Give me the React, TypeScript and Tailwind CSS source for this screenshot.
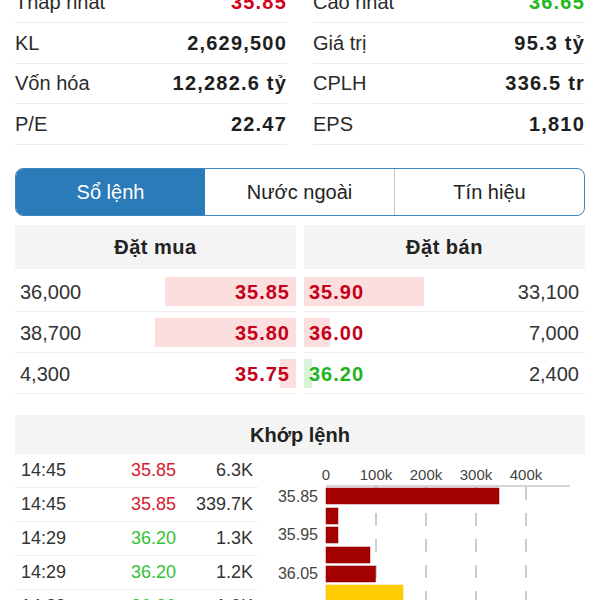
import React from 'react';

type Stat = { label: string; value: string; color?: string };

const leftStats: Stat[] = [
    { label: 'Thấp nhất', value: '35.85', color: 'text-[#d0021b]' },
    { label: 'KL', value: '2,629,500' },
    { label: 'Vốn hóa', value: '12,282.6 tỷ' },
    { label: 'P/E', value: '22.47' },
];

const rightStats: Stat[] = [
    { label: 'Cao nhất', value: '36.65', color: 'text-[#1fb81f]' },
    { label: 'Giá trị', value: '95.3 tỷ' },
    { label: 'CPLH', value: '336.5 tr' },
    { label: 'EPS', value: '1,810' },
];

const bids = [
    { vol: '36,000', price: '35.85', bar: 131, up: false },
    { vol: '38,700', price: '35.80', bar: 141, up: false },
    { vol: '4,300', price: '35.75', bar: 16, up: false },
];

const asks = [
    { vol: '33,100', price: '35.90', bar: 120, up: false },
    { vol: '7,000', price: '36.00', bar: 26, up: false },
    { vol: '2,400', price: '36.20', bar: 8, up: true },
];

const trades = [
    { time: '14:45', price: '35.85', vol: '6.3K', up: false },
    { time: '14:45', price: '35.85', vol: '339.7K', up: false },
    { time: '14:29', price: '36.20', vol: '1.3K', up: true },
    { time: '14:29', price: '36.20', vol: '1.2K', up: true },
    { time: '14:29', price: '36.20', vol: '1.0K', up: true },
];

// khoi luong theo muc gia (nghin)
const volBars = [
    { y: 34, k: 346, color: '#a30000' },
    { y: 54, k: 24, color: '#a30000' },
    { y: 73, k: 24, color: '#a30000' },
    { y: 93, k: 88, color: '#a30000' },
    { y: 112, k: 99, color: '#a30000' },
    { y: 131, k: 154, color: '#ffcc00' },
];

const StatColumn: React.FC<{ items: Stat[] }> = ({ items }) => (
    <div>
        {items.map((s) => (
            <div key={s.label} className="h-[40.5px] border-b border-[#ececec] flex items-center justify-between">
                <span className="text-[20px] text-[#2a2a2a]">{s.label}</span>
                <span className={`text-[20px] font-bold tracking-[1.2px] ${s.color ?? 'text-[#1e1e1e]'}`}>{s.value}</span>
            </div>
        ))}
    </div>
);

const VolumeChart: React.FC = () => (
    <svg width={327} height={146} className="block">
        {[0, 100, 200, 300, 400].map((k) => (
            <text key={k} x={68 + k * 0.5} y={26} fontSize={15} fill="#444" textAnchor="middle">
                {k === 0 ? '0' : `${k}k`}
            </text>
        ))}
        {[100, 200, 300, 400].map((k) => (
            <line key={k} x1={68 + k * 0.5} x2={68 + k * 0.5} y1={33} y2={146} stroke="#bdbdbd" strokeWidth={1.5} strokeDasharray="13 13" />
        ))}
        <line x1={68} x2={312} y1={32} y2={32} stroke="#aaa" strokeWidth={1} />
        {volBars.map((b) => (
            <rect key={b.y} x={68} y={b.y} width={b.k * 0.5} height={16} fill={b.color} stroke={b.color === '#ffcc00' ? '#f2c200' : '#8a0000'} strokeWidth={0.5} />
        ))}
        <text x={60} y={47.5} fontSize={16} fill="#444" textAnchor="end">35.85</text>
        <text x={60} y={85.5} fontSize={16} fill="#444" textAnchor="end">35.95</text>
        <text x={60} y={124.5} fontSize={16} fill="#444" textAnchor="end">36.05</text>
    </svg>
);

const App: React.FC = () => {
    return (
        <div className="w-[600px] h-[600px] overflow-hidden bg-white font-['Liberation_Sans',Arial,sans-serif] text-[#222]">
            <div className="px-[15px]">
                <div className="-mt-[17.5px] grid grid-cols-2 gap-x-[26px]">
                    <StatColumn items={leftStats} />
                    <StatColumn items={rightStats} />
                </div>

                <div className="mt-[23.5px] h-[48px] rounded-[8px] border-[1.5px] border-[#3d86c0] flex overflow-hidden">
                    <div className="flex-1 bg-[#2b7bb9] text-white text-[20px] flex items-center justify-center">Sổ lệnh</div>
                    <div className="flex-1 text-[20px] text-[#222] flex items-center justify-center">Nước ngoài</div>
                    <div className="flex-1 text-[20px] text-[#222] border-l border-[#c8c8c8] flex items-center justify-center">Tín hiệu</div>
                </div>

                <div className="mt-[9px] grid grid-cols-2 gap-x-[8px]">
                    <div>
                        <div className="h-[44px] bg-[#f4f4f4] flex items-center justify-center text-[20px] font-bold tracking-[0.5px]">Đặt mua</div>
                        {bids.map((r, i) => (
                            <div key={r.price} className={`relative h-[41px] border-b border-[#eeeeee] flex items-center justify-between pl-[5px] pr-[6px] ${i === 0 ? 'mt-[2px]' : ''}`}>
                                <div className="absolute right-0 top-[6px] bottom-[5px] bg-[#fddede]" style={{ width: r.bar }} />
                                <span className="relative pt-[2px] text-[20px] text-[#333]">{r.vol}</span>
                                <span className={`relative pt-[2px] text-[20px] font-bold tracking-[1px] ${r.up ? 'text-[#1fb31f]' : 'text-[#c4001a]'}`}>{r.price}</span>
                            </div>
                        ))}
                    </div>
                    <div>
                        <div className="h-[44px] bg-[#f4f4f4] flex items-center justify-center text-[20px] font-bold tracking-[0.5px]">Đặt bán</div>
                        {asks.map((r, i) => (
                            <div key={r.price} className={`relative h-[41px] border-b border-[#eeeeee] flex items-center justify-between pl-[5px] pr-[6px] ${i === 0 ? 'mt-[2px]' : ''}`}>
                                <div className={`absolute left-0 top-[6px] bottom-[5px] ${r.up ? 'bg-[#d8f3d8]' : 'bg-[#fddede]'}`} style={{ width: r.bar }} />
                                <span className={`relative pt-[2px] text-[20px] font-bold tracking-[1px] ${r.up ? 'text-[#1fb31f]' : 'text-[#c4001a]'}`}>{r.price}</span>
                                <span className="relative pt-[2px] text-[20px] text-[#333]">{r.vol}</span>
                            </div>
                        ))}
                    </div>
                </div>

                <div className="mt-[21px] h-[39px] bg-[#f4f4f4] flex items-center justify-center text-[20px] font-bold">Khớp lệnh</div>

                <div className="flex">
                    <div className="w-[243px]">
                        {trades.map((t, i) => (
                            <div key={i} className={`${i === 0 ? 'h-[33.5px]' : 'h-[34px]'} border-b border-[#eeeeee] flex items-center text-[18px] text-[#333]`}>
                                <span className="w-[66px] pl-[6px]">{t.time}</span>
                                <span className={`w-[95px] text-right ${t.up ? 'text-[#35bf35]' : 'text-[#d2222e]'}`}>{t.price}</span>
                                <span className="flex-1 text-right pr-[5px]">{t.vol}</span>
                            </div>
                        ))}
                    </div>
                    <VolumeChart />
                </div>
            </div>
        </div>
    );
};

export default App;
